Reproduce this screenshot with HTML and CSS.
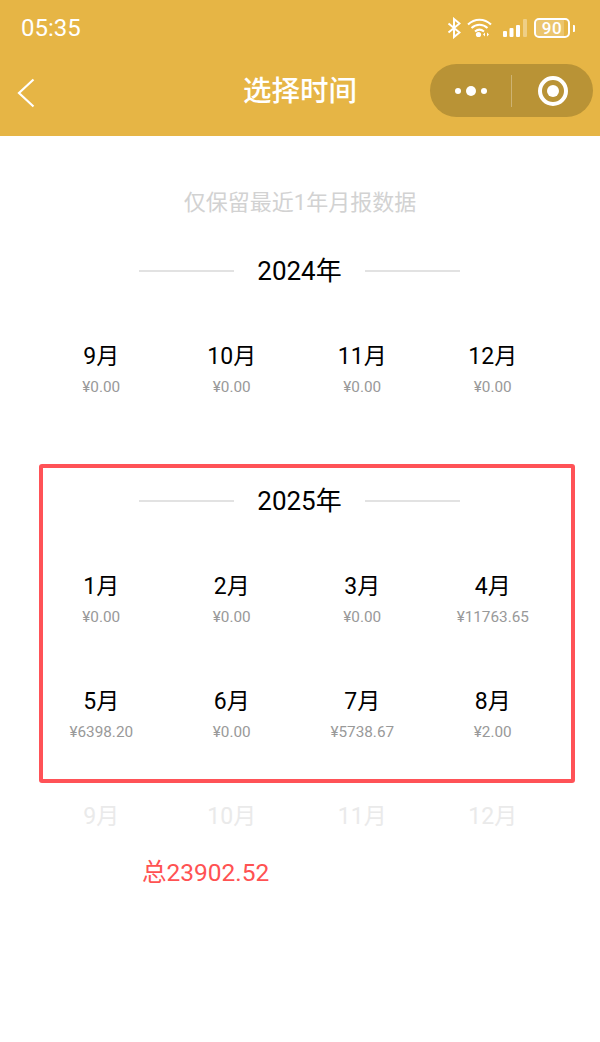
FILE: index.html
```html
<!DOCTYPE html>
<html lang="zh">
<head>
<meta charset="utf-8">
<title>选择时间</title>
<link rel="stylesheet" href="styles.css">
</head>
<body>
<header class="header">
  <div class="status">
    <span class="time">05:35</span>
    <div class="status-icons">
      <svg class="ic-bt" width="14" height="22" viewBox="0 0 14 22"><path d="M1.500 6.500l11 9-5.500 4.500V2l5.500 4.500-11 9" fill="none" stroke="#fff" stroke-width="2"/></svg>
      <svg class="ic-wifi" width="27" height="22" viewBox="0 0 27 22"><g fill="none" stroke="#fff" stroke-width="2"><path d="M1 7.500C7.500 1 17.500 1 24 7.500"/><path d="M4.500 11C9 6.500 16 6.500 20.500 11"/><path d="M8 14.500c3-2.500 6-2.500 9 0"/></g><circle cx="11.500" cy="17.500" r="2.600" fill="#fff"/><path d="M18 15.500v4l-2-2zM20 15.500v4l2-2z" fill="#fff"/></svg>
      <svg class="ic-signal" width="28" height="22" viewBox="0 0 28 22"><g fill="#fff"><rect x="1" y="14" width="4" height="6" rx="1"/><rect x="7.500" y="11" width="4" height="9" rx="1"/><rect x="14" y="8" width="4" height="12" rx="1"/><rect x="21" y="2" width="4" height="18" rx="1" opacity=".35"/></g></svg>
      <div class="battery"><span class="battery-fill"></span><span class="battery-num">90</span></div>
      <span class="battery-tip"></span>
    </div>
  </div>
  <div class="nav">
    <svg class="back" width="20" height="32" viewBox="0 0 20 32"><path d="M17.500 2.500L3 16l14.500 13.500" fill="none" stroke="#fff" stroke-width="2.200"/></svg>
    <h1 class="title">选择时间</h1>
    <div class="capsule">
      <div class="dots"><i class="dot"></i><i class="dot dot-big"></i><i class="dot"></i></div>
      <span class="sep"></span>
      <div class="target"><span class="target-core"></span></div>
    </div>
  </div>
</header>
<main class="main">
  <p class="hint">仅保留最近1年月报数据</p>

  <section class="year">
    <div class="year-head"><span class="line"></span><span class="year-label">2024年</span><span class="line"></span></div>
    <div class="months">
      <div class="month"><span class="m">9月</span><span class="v">¥0.00</span></div>
      <div class="month"><span class="m">10月</span><span class="v">¥0.00</span></div>
      <div class="month"><span class="m">11月</span><span class="v">¥0.00</span></div>
      <div class="month"><span class="m">12月</span><span class="v">¥0.00</span></div>
    </div>
  </section>

  <section class="year year-second">
    <div class="year-head"><span class="line"></span><span class="year-label">2025年</span><span class="line"></span></div>
    <div class="months">
      <div class="month"><span class="m">1月</span><span class="v">¥0.00</span></div>
      <div class="month"><span class="m">2月</span><span class="v">¥0.00</span></div>
      <div class="month"><span class="m">3月</span><span class="v">¥0.00</span></div>
      <div class="month"><span class="m">4月</span><span class="v">¥11763.65</span></div>
      <div class="month"><span class="m">5月</span><span class="v">¥6398.20</span></div>
      <div class="month"><span class="m">6月</span><span class="v">¥0.00</span></div>
      <div class="month"><span class="m">7月</span><span class="v">¥5738.67</span></div>
      <div class="month"><span class="m">8月</span><span class="v">¥2.00</span></div>
      <div class="month month-off"><span class="m">9月</span></div>
      <div class="month month-off"><span class="m">10月</span></div>
      <div class="month month-off"><span class="m">11月</span></div>
      <div class="month month-off"><span class="m">12月</span></div>
    </div>
  </section>

  <p class="total">总23902.52</p>
  <div class="highlight"></div>
</main>
</body>
</html>
```
FILE: styles.css
```css
* { box-sizing: border-box; }
html, body { margin: 0; padding: 0; }
body {
  width: 600px;
  height: 1042px;
  background: #fff;
  overflow: hidden;
  font-family: Roboto, "Noto Sans CJK SC", sans-serif;
  color: #000;
}
.header { height: 136px; background: #e6b545; color: #fff; }
.status {
  height: 56px;
  display: flex;
  align-items: center;
  justify-content: space-between;
  padding: 0 25px 0 21px;
}
.time { font-size: 24px; line-height: 58px; font-weight: 400; }
.status-icons { display: flex; align-items: center; }
.ic-bt { margin-right: 6px; }
.ic-wifi { margin-right: 8px; }
.ic-signal { margin-right: 4px; }
.battery {
  position: relative;
  width: 36px;
  height: 20px;
  border: 2px solid #fff;
  border-radius: 5px;
  overflow: hidden;
  text-align: center;
}
.battery-fill { position: absolute; left: 0; top: 0; bottom: 0; width: 86%; background: rgba(255,255,255,.22); }
.battery-num { position: relative; display: block; font-size: 17px; line-height: 16px; font-weight: 500; letter-spacing: 0.500px; }
.battery-tip { width: 2px; height: 7px; margin-left: 3px; background: #fff; border-radius: 0 1px 1px 0; }
.nav {
  position: relative;
  height: 80px;
  display: flex;
  align-items: center;
  justify-content: center;
  padding-bottom: 8px;
}
.back { position: absolute; left: 16px; top: 21px; }
.title { margin: 0; font-size: 28.500px; line-height: 40px; font-weight: 500; }
.capsule {
  position: absolute;
  left: 430px;
  top: 8px;
  width: 163px;
  height: 53px;
  border-radius: 27px;
  background: #b99336;
  display: flex;
  align-items: center;
}
.dots { width: 81px; display: flex; align-items: center; justify-content: center; gap: 5px; }
.dot { width: 6px; height: 6px; background: #fff; border-radius: 50%; }
.dot-big { width: 10px; height: 10px; }
.sep { width: 1px; height: 32px; background: rgba(255,255,255,.3); }
.target {
  width: 30px;
  height: 30px;
  margin-left: 26px;
  border: 4px solid #fff;
  border-radius: 50%;
  display: flex;
  align-items: center;
  justify-content: center;
}
.target-core { width: 12px; height: 12px; background: #fff; border-radius: 50%; }

.main { position: relative; height: 906px; }
.hint {
  margin: 0;
  padding-top: 51px;
  height: 113px;
  line-height: 32px;
  text-align: center;
  font-size: 22px;
  color: #d2d2d2;
}
.year-head { display: flex; align-items: center; justify-content: center; height: 44px; padding-right: 1px; }
.line { width: 95px; height: 2px; background: #e2e2e2; }
.year-label { width: 131px; text-align: center; font-size: 26px; line-height: 44px; }
.months {
  margin: 47px 0 0 36px;
  width: 522px;
  display: grid;
  grid-template-columns: repeat(4, 130.500px);
  grid-auto-rows: 115px;
}
.month { display: flex; flex-direction: column; align-items: center; }
.m { font-size: 23px; line-height: 34px; }
.v { font-size: 15.300px; line-height: 22px; margin-top: 2px; color: #999; }
.month-off .m { color: #eaeaea; }
.year-second { margin-top: 24px; }
.total {
  margin: 0;
  position: absolute;
  left: 142px;
  top: 720px;
  font-size: 24.500px;
  line-height: 34px;
  color: #ff5252;
}
.highlight {
  position: absolute;
  left: 39px;
  top: 328px;
  width: 536px;
  height: 319px;
  border: 4px solid #ff5257;
  border-radius: 3px;
}
```
